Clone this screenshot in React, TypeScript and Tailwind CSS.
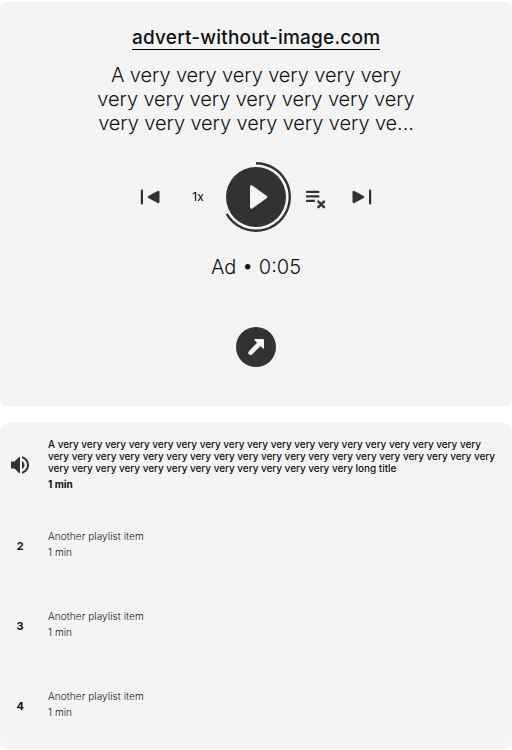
const ITEMS = [2, 3, 4];

function Controls() {
  return (
    <div className="mt-[27px] flex h-[70px] w-[232px] shrink-0 items-center text-[#323232]">
      <svg className="h-5 w-5 shrink-0" viewBox="0 0 20 20" fill="currentColor">
        <rect x="0.8" y="2.4" width="2.2" height="15.2" rx="1" />
        <path d="M8.3 9.1 17.7 4Q19.5 3.3 19.5 5.3V14.7Q19.5 16.7 17.7 16L8.3 10.9Q7.2 10 8.3 9.1Z" />
      </svg>
      <span className="ml-[18px] w-10 shrink-0 text-center text-[12px] leading-4 text-black">1x</span>
      <svg className="ml-[3px] h-[70px] w-[70px] shrink-0" viewBox="0 0 70 70" fill="none">
        <circle cx="35" cy="35" r="30" fill="#323232" />
        <path d="M35 1.2A33.8 33.8 0 1 1 5.7 51.9" stroke="#323232" strokeWidth="2.4" />
        <path d="M29 25.3Q29 22 31.7 23.8L45.2 33.4Q47.4 35 45.2 36.6L31.7 46.2Q29 48 29 44.7Z" fill="#f4f4f4" />
      </svg>
      <svg className="ml-[14px] h-5 w-5 shrink-0 overflow-visible" viewBox="0 0 20 20" fill="none" stroke="currentColor" strokeWidth="2.2" strokeLinecap="round">
        <path d="M2 4.9H13.4M2 9.4H13.4M2 13.9H9" />
        <path d="M13.4 14.6 19 20.2M19 14.6 13.4 20.2" strokeWidth="2.5" />
      </svg>
      <svg className="ml-[27px] h-5 w-5 shrink-0" viewBox="0 0 20 20" fill="currentColor">
        <rect x="17" y="2.4" width="2.2" height="15.2" rx="1" />
        <path d="M11.7 9.1 2.3 4Q.5 3.3 .5 5.3V14.7Q.5 16.7 2.3 16L11.7 10.9Q12.8 10 11.7 9.1Z" />
      </svg>
    </div>
  );
}

export default function App() {
  return (
    <main className="h-[750px] w-[512px] overflow-hidden bg-white pt-px font-['Inter',sans-serif] text-[#111]">
      <section className="flex h-[406px] flex-col items-center rounded-[8px] bg-[#f4f4f4]">
        <a className="mt-6 h-[25px] w-[248px] whitespace-nowrap border-b border-black text-[19px] font-medium leading-[26px] tracking-[0.19px]">advert-without-image.com</a>
        <p className="mt-[13px] whitespace-nowrap text-center text-[20px] font-light leading-6 tracking-[-0.09px]">
          A very very very very very very<br />
          very very very very very very very<br />
          very very very very very very ve...
        </p>
        <Controls />
        <p className="mt-[23px] text-[20px] font-light leading-6">Ad • 0:05</p>
        <button className="mt-[48px] h-10 w-10 rounded-full bg-[#323232]" aria-label="Visit advert">
          <svg className="h-10 w-10" viewBox="0 0 40 40" fill="#f4f4f4">
            <path d="M19.3 12H27Q28 12 28 13V20.7Q28 22.4 26.7 21.2L24.6 19.1 16 27.6Q14.6 28.7 13.1 27.5 11.4 25.9 12.7 24.4L21.1 15.7 18.8 13.4Q17.8 12 19.3 12Z" />
          </svg>
        </button>
      </section>
      <section className="mt-4 h-[326px] rounded-[8px] bg-[#f4f4f4] pt-[3px]">
        <div className="flex h-20 items-center">
          <div className="flex w-10 justify-center">
            <svg className="mt-[-2px] h-6 w-6" viewBox="0 0 24 24" fill="#323232">
              <path d="M3 9Q3 8.5 3.5 8.5H6.5L10.8 4.2Q12 3.2 12 4.8V19.2Q12 20.8 10.8 19.8L6.5 15.5H3.5Q3 15.5 3 15ZM16.5 12c0-1.77-1.02-3.29-2.5-4.03v8.05c1.48-.73 2.5-2.25 2.5-4.02zM14 3.23v2.06c2.89.86 5 3.54 5 6.71s-2.11 5.85-5 6.71v2.06c4.01-.91 7-4.49 7-8.77s-2.99-7.86-7-8.77z" />
            </svg>
          </div>
          <div className="-mt-1 ml-2 text-[10px] leading-3">
            <p className="whitespace-nowrap font-medium tracking-[-0.042px]">
              A very very very very very very very very very very very very very very very very very very<br />
              very very very very very very very very very very very very very very very very very very very<br />
              very very very very very very very very very very very very very long title
            </p>
            <p className="mt-1 font-bold">1 min</p>
          </div>
        </div>
        {ITEMS.map((number) => (
          <div key={number} className="flex h-20 items-center text-[10px] leading-3">
            <span className="w-10 text-center text-[11px] font-bold tracking-[-0.3px]">{number}</span>
            <div className="-mt-1 ml-2 font-light tracking-[0.07px] text-[#111]">
              <p>Another playlist item</p>
              <p className="mt-1">1 min</p>
            </div>
          </div>
        ))}
      </section>
    </main>
  );
}
